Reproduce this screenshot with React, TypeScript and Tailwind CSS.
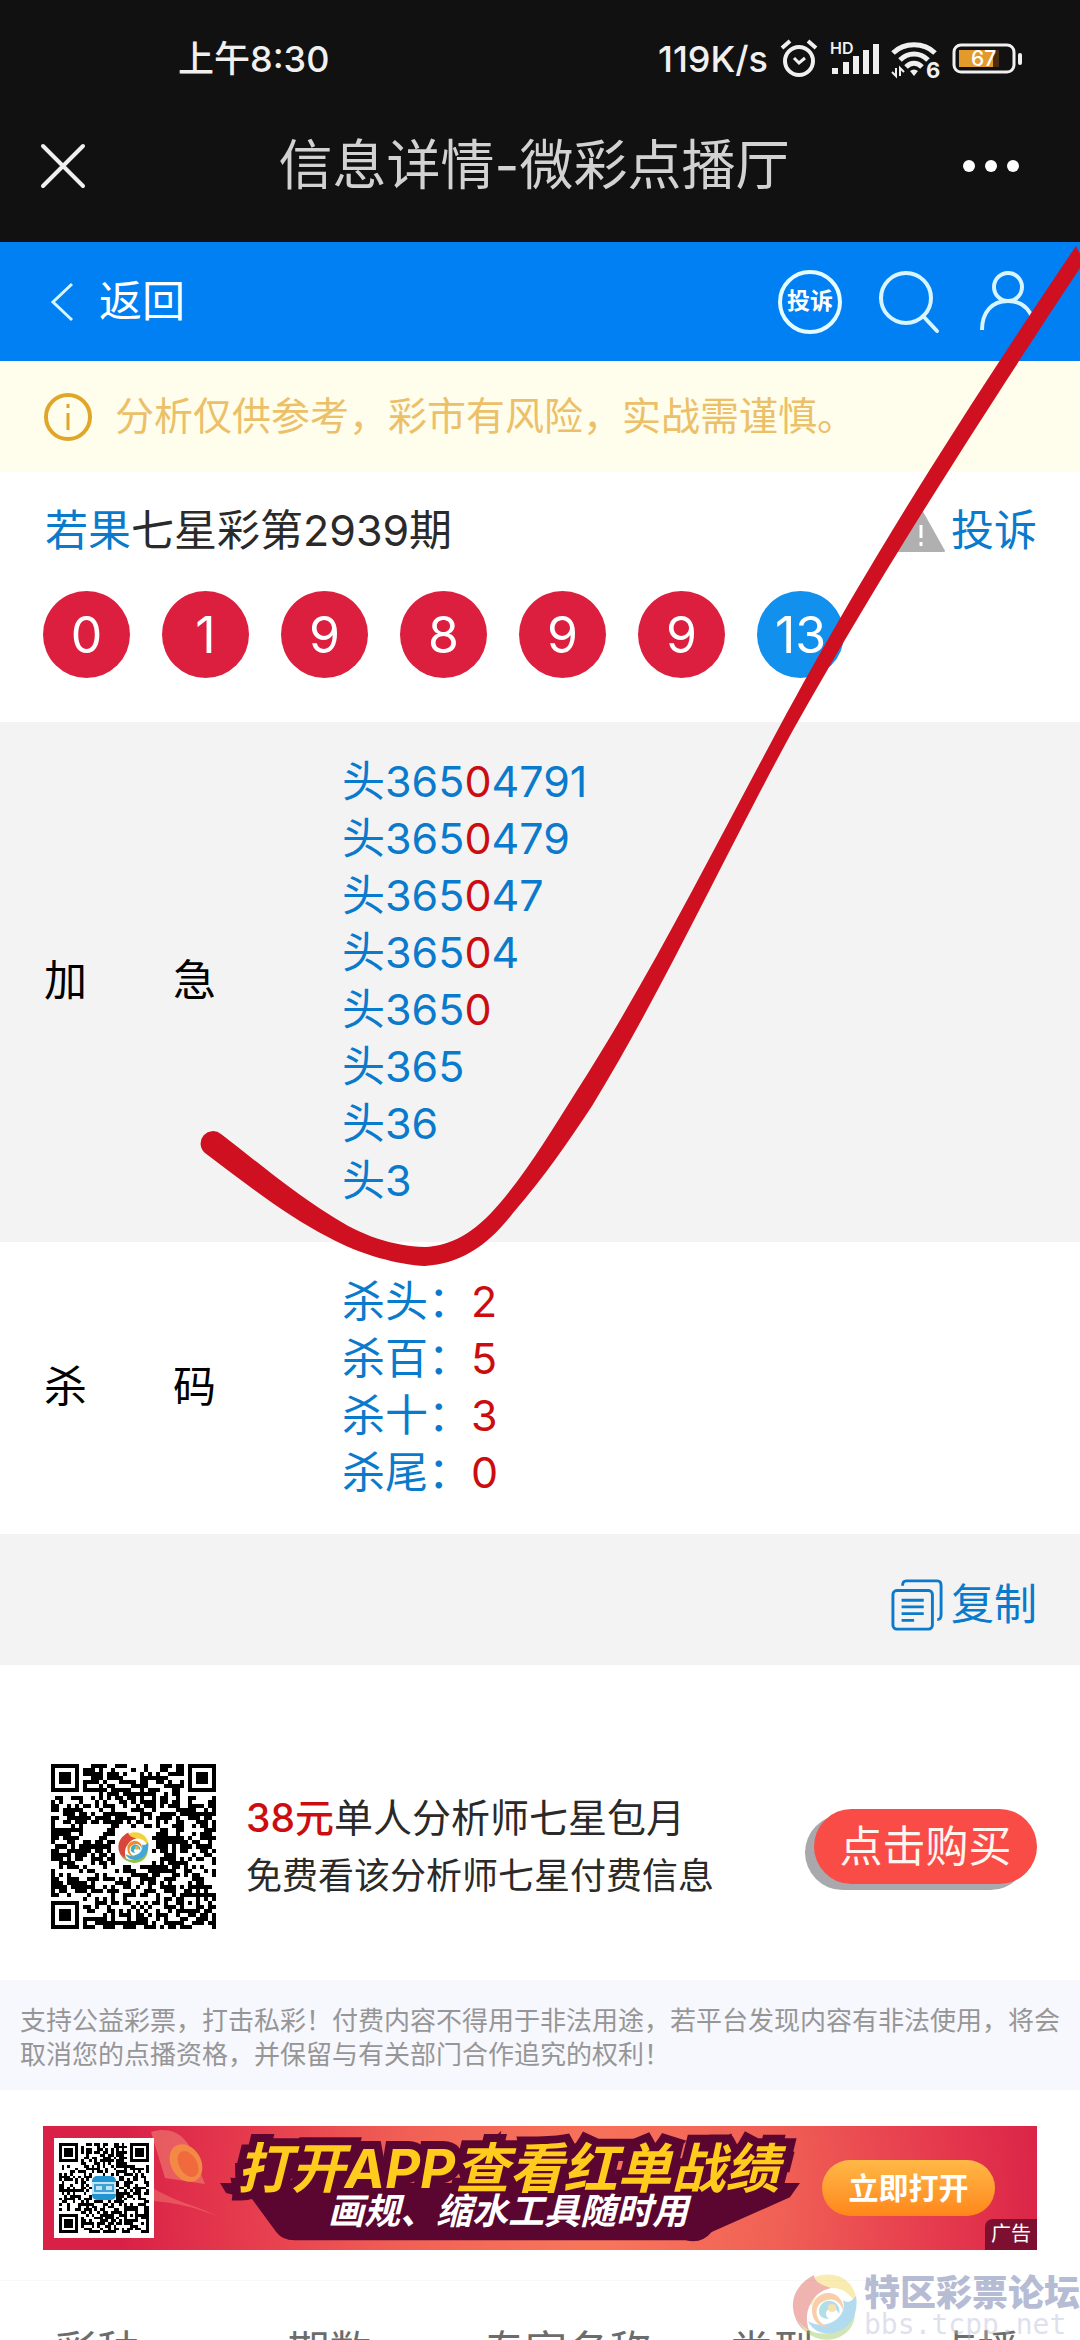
import React from 'react';

const BALLS = ['0', '1', '9', '8', '9', '9', '13'];

const HEADS = ['36504791', '3650479', '365047', '36504', '3650', '365', '36', '3'];

const KILLS = [
  { label: '杀头：', value: '2' },
  { label: '杀百：', value: '5' },
  { label: '杀十：', value: '3' },
  { label: '杀尾：', value: '0' },
];

// Builds the path of a QR style grid: three finders, one alignment mark, free middle
const buildQrPath = (size: number, seed: number, hole: number) => {
  let state = seed;
  let d = '';
  const ring = (x: number, y: number, cx: number, cy: number) =>
    Math.max(Math.abs(x - cx), Math.abs(y - cy));
  const mid = (size - 1) / 2;

  for (let y = 0; y < size; y++) {
    for (let x = 0; x < size; x++) {
      state = (state * 1103515245 + 12345) % 2147483648;
      let dark = (state >> 12) % 100 < 54;
      const finders = [
        ring(x, y, 3, 3),
        ring(x, y, size - 4, 3),
        ring(x, y, 3, size - 4),
      ];
      const near = Math.min(...finders);
      const align = ring(x, y, size - 7, size - 7);
      if (near <= 4) dark = near === 3 || near <= 1;
      else if (align <= 2) dark = align !== 1;
      else if (ring(x, y, mid, mid) <= hole) dark = false;
      if (dark) d += `M${x} ${y}h1v1h-1z`;
    }
  }
  return d;
};

const PROMO_QR = buildQrPath(41, 7919, 4);
const BANNER_QR = buildQrPath(33, 4243, 4);

const Swirl: React.FC<{ className: string }> = ({ className }) => (
  <svg className={className} viewBox="0 0 68 68">
    <path d="M14 12C24 0 46-1 57 11c6 7 8 14 7 21C58 20 48 15 38 16 28 17 22 24 20 34 15 28 12 20 14 12z" fill="#f3d23c" />
    <path d="M22 3C8 10 0 22 1 36c1 12 8 22 18 27-5-10-6-22 0-32 4-8 11-13 20-15-9-3-17-6-17-13z" fill="#d9463a" />
    <path d="M6 48c8 12 22 16 34 12 12-4 20-14 22-27 4 16-4 30-20 34-14 3-29-3-36-19z" fill="#8fc04a" />
    <path d="M64 24c3 18-6 34-23 37-12 2-21-3-25-12 8 5 18 5 26 0 9-5 11-14 9-21 5 4 9 1 13-4z" fill="#41a7d8" />
    <path d="M20 40c-1-12 8-20 18-19 9 1 14 9 13 17-3-8-9-12-16-10-8 2-12 8-10 16 2 6 6 9 11 11-9 0-15-6-16-15z" fill="#f08a2c" />
    <path d="M27 40c0-8 6-12 12-11 6 1 10 7 8 13-2-5-6-7-10-5-4 2-4 7 0 10-6 0-10-3-10-7z" fill="#3fb0c8" />
    <circle cx="40" cy="36" r="4" fill="#f2b233" />
  </svg>
);

const StatusIcons: React.FC = () => (
  <svg className="h-10 w-[246px] overflow-visible" viewBox="0 0 246 40" fill="none" stroke="#f0f0f0">
    {/* alarm */}
    <circle cx="19" cy="22" r="14" strokeWidth="4" />
    <path d="M14 19l5 5 6-5" strokeWidth="3" />
    <path d="M2 9l8-7M28 2l8 7" strokeWidth="4" />
    {/* signal */}
    <text x="50" y="15" fill="#f0f0f0" stroke="none" className="font-['Inter'] text-[16px] font-semibold">HD</text>
    <path d="M55 35v-6M66 35V23M76 35V17M86 35V11M96 35V5" strokeWidth="6" />
    {/* wifi */}
    <path d="M113 14c11-11 31-11 42 0" strokeWidth="5" />
    <path d="M120 21c8-8 20-8 28 0" strokeWidth="5" />
    <path d="M126 28c5-5 11-5 16 0" strokeWidth="5" />
    <path d="M130 32q4-3 8 0l-4 5z" fill="#f0f0f0" stroke="none" />
    <path d="M116 29v8l-4-4M120 37v-8l4 4" strokeWidth="2" />
    <text x="146" y="39" fill="#f0f0f0" stroke="none" className="font-['Inter'] text-[22px] font-bold">6</text>
    {/* battery */}
    <rect x="174" y="6" width="60" height="27" rx="7" strokeWidth="3" />
    <path d="M179 11h40v17h-40z" fill="#4a2c10" stroke="none" />
    <path d="M179 11h34v17h-34z" fill="#e39a2b" stroke="none" />
    <text x="191" y="27" fill="#fff" stroke="none" className="font-['Inter'] text-[21px] font-medium">67</text>
    <path d="M240 16v8" strokeWidth="4" strokeLinecap="round" />
  </svg>
);

const App: React.FC = () => {
  return (
    <div className="relative h-screen overflow-hidden bg-white font-['Inter','Noto_Sans_CJK_SC',sans-serif] text-[43px] text-[#2a2a2a]">
      {/* Status bar and title */}
      <div className="bg-[#111111] pb-7">
        <div className="flex h-[118px] items-center justify-between pr-[54px] pl-[178px] text-[36px] font-medium text-[#f0f0f0]">
          <span>上午8:30</span>
          <div className="flex items-center gap-3">
            <span>119K/s</span>
            <StatusIcons />
          </div>
        </div>
        <div className="flex h-24 items-center justify-between px-10">
          <button aria-label="关闭" className="pr-5">
            <svg className="h-[46px] w-[46px]" viewBox="0 0 46 46" stroke="#f0f0f0" strokeWidth="4" strokeLinecap="round">
              <path d="M3 3l40 40M43 3L3 43" />
            </svg>
          </button>
          <h1 className="text-[54px] leading-none text-[#d2d2d2]">信息详情-微彩点播厅</h1>
          <button aria-label="更多" className="pr-5">
            <svg className="h-[14px] w-[58px]" viewBox="0 0 58 14" fill="#fff">
              <circle cx="7" cy="7" r="6" />
              <circle cx="29" cy="7" r="6" />
              <circle cx="51" cy="7" r="6" />
            </svg>
          </button>
        </div>
      </div>

      {/* Site header */}
      <header className="flex h-[119px] items-center justify-between bg-[#0080f3] pr-[38px] pl-[49px] text-white">
        <a href="#back" className="flex items-center gap-[25px]">
          <svg className="h-10 w-[25px]" viewBox="0 0 25 40" fill="none" stroke="#d8f4ff" strokeWidth="3">
            <path d="M23 2L4 20l19 18" />
          </svg>
          返回
        </a>
        <div className="flex items-center gap-9">
          <a href="#complain" className="flex h-16 w-16 items-center justify-center rounded-full border-4 border-[#e4fbff] text-[23px] font-bold">
            投诉
          </a>
          <a href="#search" aria-label="搜索">
            <svg className="h-16 w-16" viewBox="0 0 64 64" fill="none" stroke="#d8f4ff" strokeWidth="4">
              <circle cx="28" cy="28" r="25" />
              <path d="M45 46l14 15" strokeLinecap="round" />
            </svg>
          </a>
          <a href="#user" aria-label="我的">
            <svg className="h-16 w-16" viewBox="0 0 64 64" fill="none" stroke="#d8f4ff" strokeWidth="4">
              <circle cx="30" cy="17" r="14" />
              <path d="M4 60C4 42 14 31 30 31s26 11 26 29" />
            </svg>
          </a>
        </div>
      </header>

      {/* Notice */}
      <div className="flex h-[111px] items-center gap-[22px] bg-[#fffdeb] pl-[43px] text-[39px] text-[#ebc069]">
        <svg className="h-[50px] w-[50px]" viewBox="0 0 50 50" fill="none" stroke="#e0a62a" strokeWidth="4">
          <circle cx="25" cy="25" r="22" />
          <path d="M25 21v17M25 12v4" strokeWidth="3" />
        </svg>
        分析仅供参考，彩市有风险，实战需谨慎。
      </div>

      {/* Issue and result */}
      <section className="px-[43px] pt-7 pb-11">
        <div className="flex items-center justify-between leading-[60px]">
          <h2 className="pl-0.5">
            <a href="#author" className="text-[#0a7acc]">若果</a>七星彩第2939期
          </h2>
          <a href="#report" className="flex items-center gap-1.5 text-[#0a7acc]">
            <svg className="h-12 w-12" viewBox="0 0 48 48">
              <path d="M24 4l23 41H1z" fill="#b0b0b0" stroke="#b0b0b0" strokeWidth="2" strokeLinejoin="round" />
              <path d="M24 19v13M24 36v4" stroke="#fff" strokeWidth="3" />
            </svg>
            投诉
          </a>
        </div>
        <div className="mt-[31px] flex gap-8 text-[50px] leading-none text-white">
          {BALLS.map((ball, i) => (
            <span
              key={i}
              className={`flex h-[87px] w-[87px] items-center justify-center rounded-full ${
                i === BALLS.length - 1 ? 'bg-[#1190ee]' : 'bg-[#dc1f3e]'
              }`}
            >
              {ball}
            </span>
          ))}
        </div>
      </section>

      {/* Picks */}
      <table className="w-full text-left leading-[57px] text-[#0a7acc]">
        <tbody>
          <tr className="bg-[#f3f3f3]">
            <th className="w-[342px] pb-1 pl-11 font-normal text-black">加　　急</th>
            <td className="pt-[31px] pb-[33px]">
              {HEADS.map((head) => (
                <div key={head}>
                  头{head.slice(0, 3)}
                  <span className="text-[#cc0d10]">{head.slice(3, 4)}</span>
                  {head.slice(4)}
                </div>
              ))}
            </td>
          </tr>
          <tr>
            <th className="pb-1 pl-11 font-normal text-black">杀　　码</th>
            <td className="pt-[31px] pb-[33px]">
              {KILLS.map((kill) => (
                <div key={kill.label}>
                  {kill.label}
                  <span className="text-[#cc0d10]">{kill.value}</span>
                </div>
              ))}
            </td>
          </tr>
        </tbody>
      </table>

      <div className="flex h-[131px] items-center justify-end bg-[#f3f3f3] pt-[10px] pr-[43px]">
        <button className="flex items-center gap-2 text-[#0a7acc]">
          <svg className="h-[52px] w-[52px]" viewBox="0 0 54 54" fill="none" stroke="#0a7acc" strokeWidth="3">
            <rect x="2" y="12" width="41" height="40" rx="4" />
            <path d="M12 7c0-3 1-5 4-5h32c3 0 4 2 4 5v30c0 3-1 5-4 5" />
            <path d="M11 22h23M11 29h23M11 36h23M11 43h13" />
          </svg>
          复制
        </button>
      </div>

      {/* Promo */}
      <section className="flex items-center pt-[99px] pr-[43px] pb-[51px] pl-[51px]">
        <div className="relative">
          <svg className="h-[165px] w-[165px]" viewBox="0 0 41 41" shapeRendering="crispEdges">
            <path d={PROMO_QR} fill="#000" />
          </svg>
          <Swirl className="absolute top-[67px] left-[67px] h-8 w-8" />
        </div>
        <div className="ml-[30px] flex-1 leading-[59px]">
          <p className="text-[39px]">
            <strong className="font-medium text-[#cc0d10]">38元</strong>单人分析师七星包月
          </p>
          <p className="text-[36px]">免费看该分析师七星付费信息</p>
        </div>
        <button className="h-[75px] w-[223px] rounded-full bg-[#fa4c46] leading-none text-[#fff4ee] shadow-[-9px_6px_0_#a9a9ad]">
          点击购买
        </button>
      </section>

      <p className="bg-[#f7f7fe] px-5 pt-6 pb-[18px] text-[26px] leading-[34px] text-[#969696]">
        支持公益彩票，打击私彩！付费内容不得用于非法用途，若平台发现内容有非法使用，将会取消您的点播资格，并保留与有关部门合作追究的权利！
      </p>

      {/* App banner */}
      <section className="border-b border-[#f8f8f8] px-[43px] pt-9 pb-[30px]">
        <div className="relative flex h-[124px] items-center overflow-hidden bg-[radial-gradient(circle_at_55%_60%,#fa7a5c_0%,#f06055_35%,#e63c4e_62%,#d92147_85%)] pr-[42px] pl-[11px]">
          <svg className="absolute top-0 left-[100px] h-full w-28" viewBox="0 0 112 124">
            <path d="M8 6c20-6 34 2 42 22l12 30-40-6z" fill="#f4907a" opacity="0.5" />
            <path d="M0 56c30 20 50 22 74 34-30-12-50-14-74-16z" fill="#f4907a" opacity="0.4" />
            <ellipse cx="43" cy="37" rx="15" ry="20" transform="rotate(-30 43 37)" fill="#f28a45" />
            <ellipse cx="45" cy="38" rx="9" ry="14" transform="rotate(-30 45 38)" fill="#f06a3e" />
          </svg>
          <div className="relative h-[100px] w-[100px] bg-white p-[5px]">
            <svg className="h-full w-full" viewBox="0 0 33 33" shapeRendering="crispEdges">
              <path d={BANNER_QR} fill="#000" />
            </svg>
            <svg className="absolute top-[38px] left-[38px] h-6 w-6" viewBox="0 0 24 24">
              <rect width="24" height="24" rx="5" fill="#2394d2" />
              <path d="M0 6h24v12H0z" fill="#bfe4f6" />
              <path d="M3 9h8v6H3zM13 9h8v6h-8z" fill="none" stroke="#3fa0d6" strokeWidth="2" />
            </svg>
          </div>
          <div className="relative mr-3 ml-[52px] flex-1 text-center font-bold whitespace-nowrap italic">
            <svg className="absolute inset-0 h-full w-full overflow-visible" viewBox="0 0 602 82" preserveAspectRatio="none">
              <path d="M14 36h578l-10 14-78 34q-10 12-26 8H88q-12 0-18-8L46 52l-26-6z" fill="#5a0630" />
            </svg>
            <p className="relative z-10 text-[54px] leading-[46px] text-[#ffcb1c] [-webkit-text-stroke:16px_#5a0630] [paint-order:stroke_fill]">
              打开APP查看红单战绩
            </p>
            <p className="relative z-20 text-[36px] leading-[38px] text-white">画规、缩水工具随时用</p>
          </div>
          <button className="relative h-14 w-[173px] rounded-full bg-linear-to-b from-[#ffb846] to-[#ff8618] text-[30px] leading-none font-bold text-white">
            立即打开
          </button>
          <span className="absolute right-0 bottom-0 rounded-tl-lg bg-[#7d1030] px-1.5 text-[20px] leading-[31px] text-white">
            广告
          </span>
        </div>
      </section>

      {/* History */}
      <table className="w-full table-fixed text-center text-[42px] leading-[60px] text-[#6c6c6c]">
        <thead>
          <tr>
            <th className="w-[18%] pt-10 font-normal">彩种</th>
            <th className="w-[25%] pt-10 font-normal">期数</th>
            <th className="w-[19%] pt-10 font-normal">专家名称</th>
            <th className="w-[19%] pt-10 font-normal">类型</th>
            <th className="w-[19%] pt-10 font-normal">点播</th>
          </tr>
        </thead>
      </table>

      {/* Forum watermark */}
      <div className="absolute right-0 bottom-0 flex items-center gap-1 opacity-40">
        <Swirl className="h-[68px] w-[68px]" />
        <div>
          <p className="text-[36px] leading-[38px] font-black text-[#4a5a96]">特区彩票论坛</p>
          <p className="font-['DejaVu_Sans_Mono',monospace] text-[28px] leading-[26px] text-[#b4b4d4]">bbs.tcpp.net</p>
        </div>
      </div>

      {/* Hand drawn tick */}
      <svg className="pointer-events-none absolute inset-0 h-full w-full" viewBox="0 0 1080 2340" fill="#cf1020">
        <path d="M205 1153C245 1183 285 1215 328 1237C360 1255 400 1265 425 1266C460 1264 488 1246 513 1213C545 1176 568 1142 592 1106C660 995 720 865 786 743C860 610 940 480 1084 262L1076 246C925 470 845 605 774 737C708 860 645 985 576 1092C552 1130 528 1170 500 1203C474 1234 450 1246 425 1247C392 1246 362 1236 330 1215C290 1190 255 1160 221 1134A12 12 0 0 0 205 1153Z" />
      </svg>
    </div>
  );
};

export default App;
